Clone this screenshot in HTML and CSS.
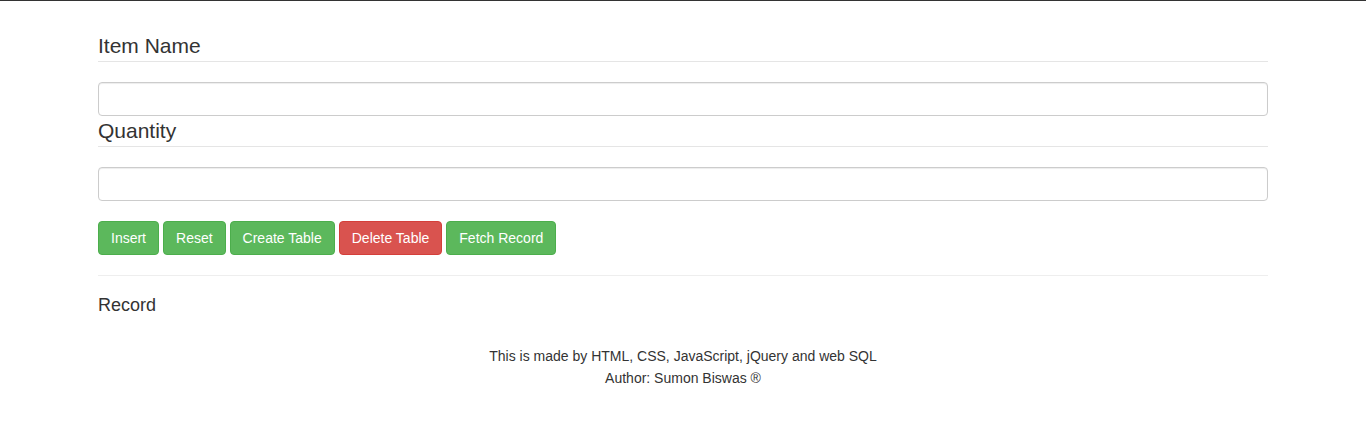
FILE: index.html
```html
<!DOCTYPE html>
<html>
<head>
<meta charset="utf-8">
<link rel="stylesheet" href="styles.css">
</head>
<body>
<div class="container">
  <form class="form">
    <fieldset class="field">
      <legend class="legend">Item Name</legend>
      <input class="form-control" type="text">
    </fieldset>
    <fieldset class="field">
      <legend class="legend">Quantity</legend>
      <input class="form-control" type="text">
    </fieldset>
    <div class="buttons">
      <button type="button" class="btn btn-success">Insert</button>
      <button type="button" class="btn btn-success">Reset</button>
      <button type="button" class="btn btn-success">Create Table</button>
      <button type="button" class="btn btn-danger">Delete Table</button>
      <button type="button" class="btn btn-success">Fetch Record</button>
    </div>
  </form>
  <hr class="divider">
  <div class="record">Record</div>
  <footer class="footer">
    <p>This is made by HTML, CSS, JavaScript, jQuery and web SQL</p>
    <p>Author: Sumon Biswas &reg;</p>
  </footer>
</div>
</body>
</html>
```
FILE: styles.css
```css
html, body {
  margin: 0;
  padding: 0;
}
body {
  font-family: "Liberation Sans", Arial, Helvetica, sans-serif;
  font-size: 14px;
  line-height: 20px;
  color: #333;
  background: #fff;
  border-top: 1px solid #333;
}
.container {
  width: 1170px;
  margin: 0 auto;
  padding-top: 30px;
}
.form {
  margin: 0;
}
.field {
  border: 0;
  margin: 0;
  padding: 0;
  min-width: 0;
}
.legend {
  display: block;
  width: 100%;
  padding: 0;
  margin-bottom: 20px;
  font-size: 21px;
  line-height: 30px;
  color: #333;
  border: 0;
  border-bottom: 1px solid #e5e5e5;
}
.form-control {
  display: block;
  box-sizing: border-box;
  width: 100%;
  height: 34px;
  padding: 6px 12px;
  font-family: inherit;
  font-size: 14px;
  color: #555;
  background: #fff;
  border: 1px solid #ccc;
  border-radius: 4px;
  box-shadow: inset 0 1px 1px rgba(0,0,0,.075);
  margin: 0;
}
.buttons {
  display: flex;
  gap: 4px;
  margin-top: 20px;
}
.btn {
  font-family: inherit;
  font-size: 14px;
  line-height: 20px;
  height: 34px;
  padding: 6px 12px;
  border: 1px solid transparent;
  border-radius: 4px;
  color: #fff;
  cursor: pointer;
  margin: 0;
}
.btn-success {
  background: #5cb85c;
  border-color: #4cae4c;
}
.btn-danger {
  background: #d9534f;
  border-color: #d43f3a;
}
.divider {
  margin: 20px 0 19px;
  border: 0;
  border-top: 1px solid #eee;
  height: 0;
}
.record {
  font-size: 18px;
  line-height: 20px;
}
.footer {
  margin-top: 30px;
  text-align: center;
}
.footer p {
  margin: 0;
  line-height: 22px;
}
```
